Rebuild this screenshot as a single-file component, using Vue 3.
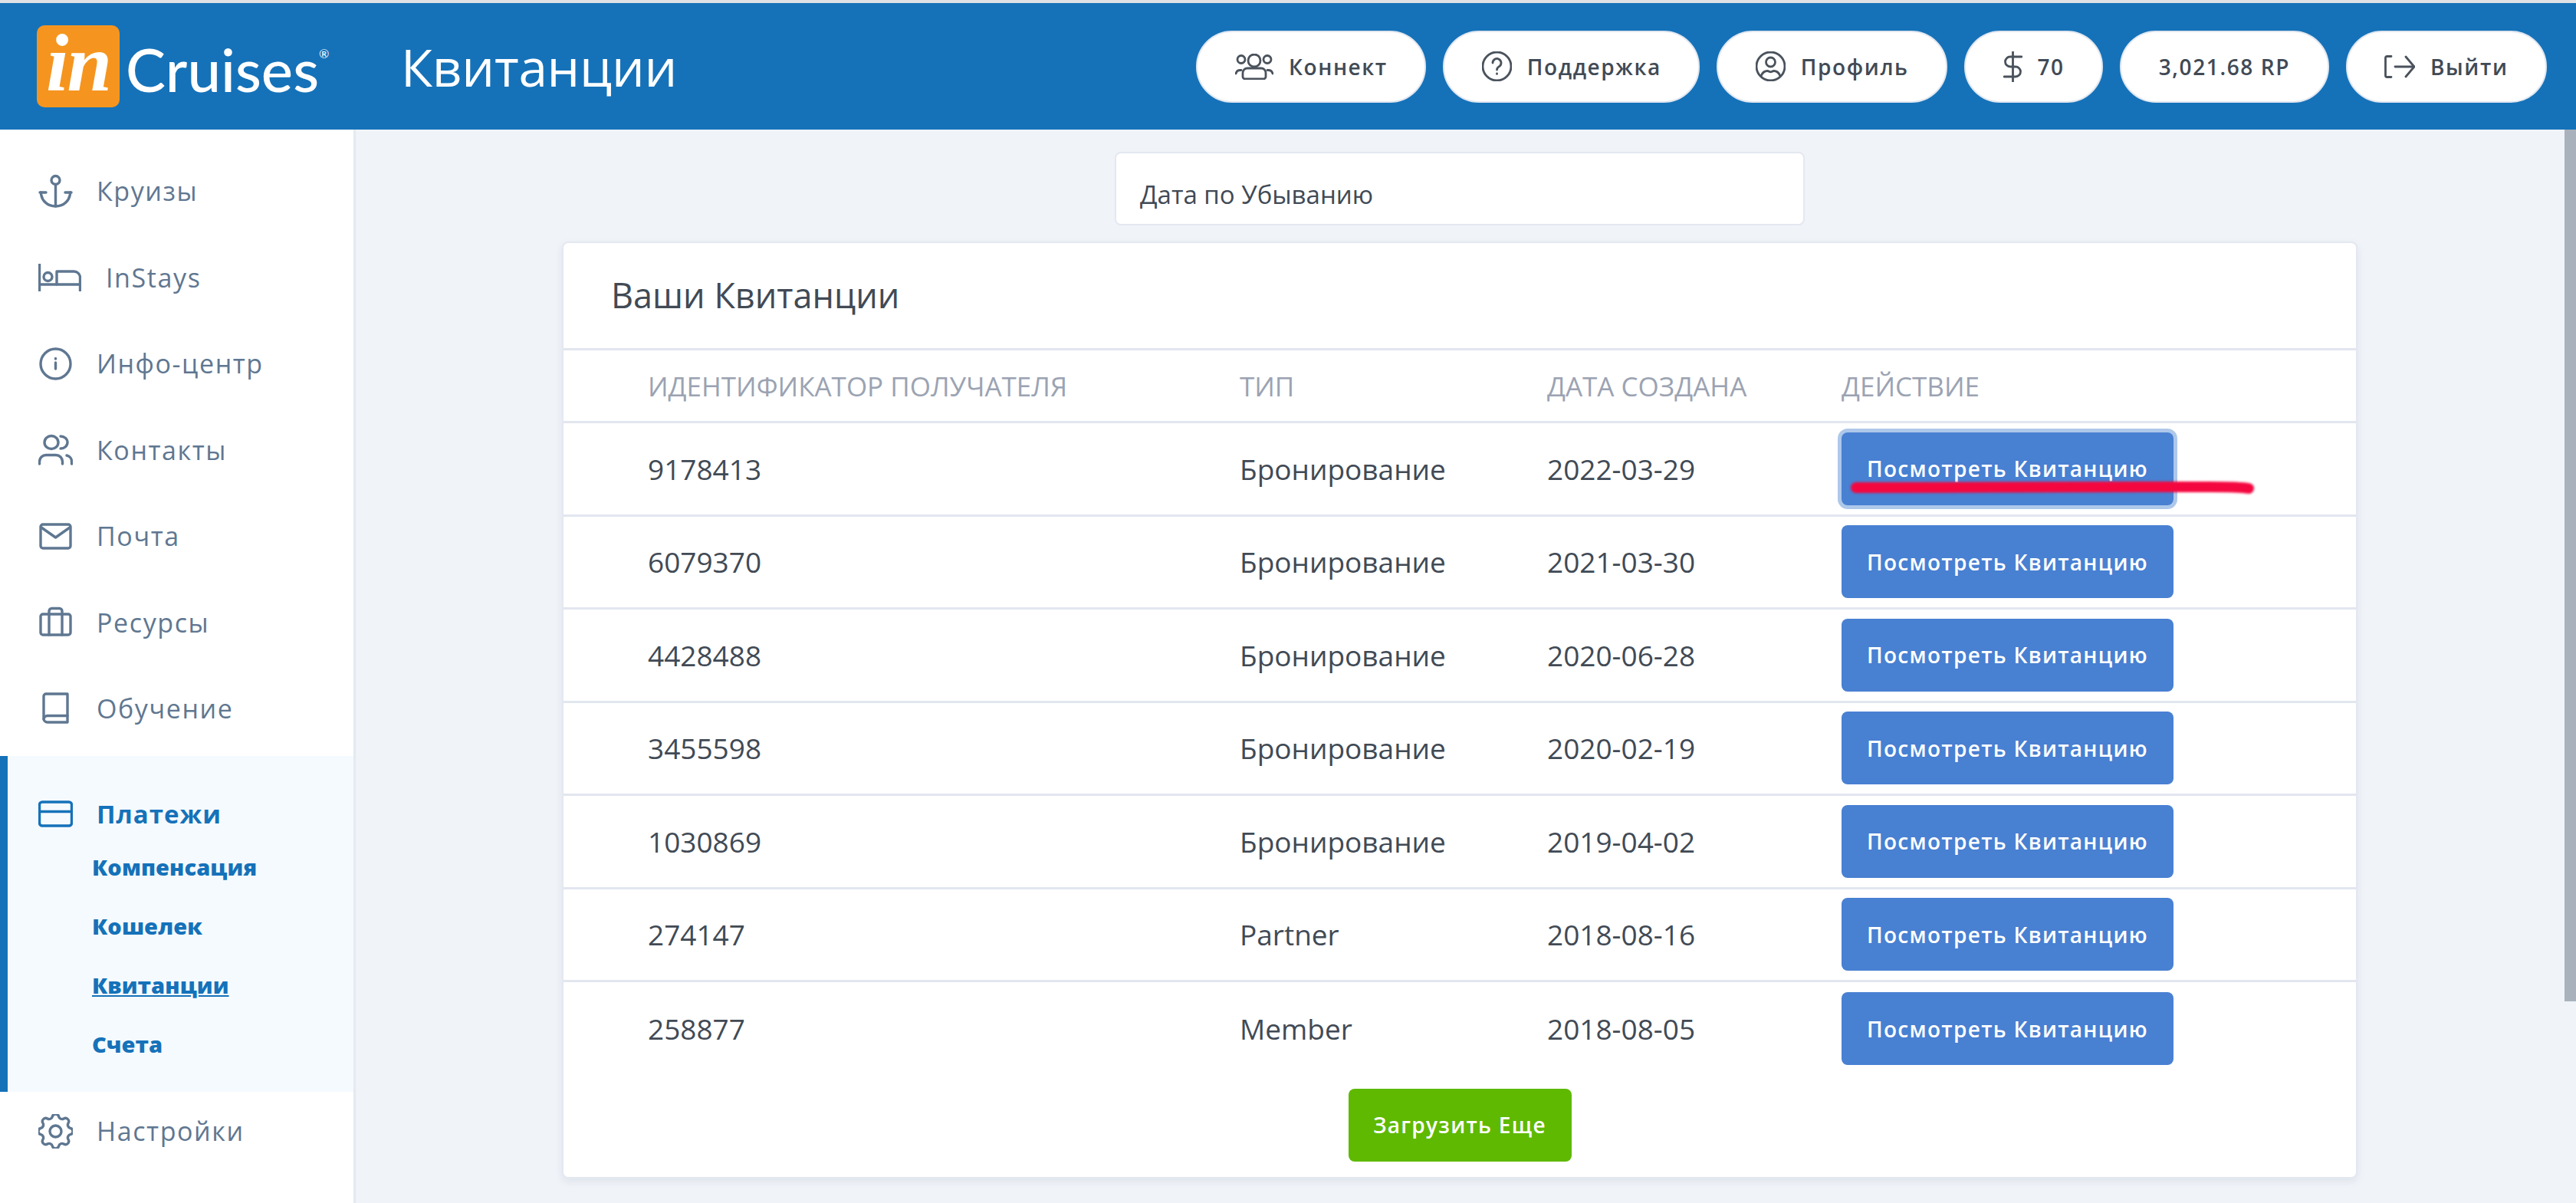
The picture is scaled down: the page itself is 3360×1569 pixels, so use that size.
<script setup>
const gearPath = 'M10.325 4.317c.426-1.756 2.924-1.756 3.35 0a1.724 1.724 0 002.573 1.066c1.543-.94 3.31.826 2.37 2.37a1.724 1.724 0 001.065 2.572c1.756.426 1.756 2.924 0 3.35a1.724 1.724 0 00-1.066 2.573c.94 1.543-.826 3.31-2.37 2.37a1.724 1.724 0 00-2.572 1.065c-.426 1.756-2.924 1.756-3.35 0a1.724 1.724 0 00-2.573-1.066c-1.543.94-3.31-.826-2.37-2.37a1.724 1.724 0 00-1.065-2.572c-1.756-.426-1.756-2.924 0-3.35a1.724 1.724 0 001.066-2.573c-.94-1.543.826-3.31 2.37-2.37.996.608 2.296.07 2.572-1.065z'

const topLinks = [
  {
    label: 'Коннект', w: 50, h: 34,
    icon: [
      'M3 7.5a5 5 0 1 0 10 0a5 5 0 1 0-10 0',
      'M17 9a8 8 0 1 0 16 0a8 8 0 1 0-16 0',
      'M37 7.5a5 5 0 1 0 10 0a5 5 0 1 0-10 0',
      'M13 33a3 3 0 0 1-3-3v-5a6 6 0 0 1 6-6h18a6 6 0 0 1 6 6v5a3 3 0 0 1-3 3z',
      'M1 26a6 6 0 0 1 6-4.5h1',
      'M49 26a6 6 0 0 0-6-4.5h-1',
    ],
  },
  {
    label: 'Поддержка', w: 39, h: 39,
    icon: [
      'M1 19.5a18.500 18.500 0 1 0 37 0a18.500 18.500 0 1 0-37 0',
      'M14 15a5.500 5.500 0 1 1 8.500 4.600c-2 1.300-3 2.400-3 4.400',
      'M19.500 29v.4',
    ],
  },
  {
    label: 'Профиль', w: 39, h: 39,
    icon: [
      'M1 19.500a18.500 18.500 0 1 0 37 0a18.500 18.500 0 1 0-37 0',
      'M13.500 14a6 6 0 1 0 12 0a6 6 0 1 0-12 0',
      'M7 32c2-5 6-6.500 8.500-6.500c1.500 0 2.500 1.300 4 1.300s2.500-1.300 4-1.300c2.500 0 6.500 1.500 8.500 6.500',
    ],
  },
  {
    label: '70', w: 25, h: 40,
    icon: [
      'M12.500 0v40',
      'M24 7H9a6.500 6.500 0 0 0 0 13h7a6.500 6.500 0 0 1 0 13H1',
    ],
  },
  { label: '3,021.68 RP' },
  {
    label: 'Выйти', w: 40, h: 30,
    icon: [
      'M9 1.500H3.500a2 2 0 0 0-2 2v23a2 2 0 0 0 2 2H9',
      'M14 15h25',
      'M28 2l11 13l-11 13',
    ],
  },
]

const sideLinks = [
  {
    label: 'Круизы', view: '0 0 45 45',
    icon: [
      'M17 8a5.500 5.500 0 1 0 11 0a5.500 5.500 0 1 0-11 0',
      'M22.500 13.500V42',
      'M3.500 24c0 10 8 18 19 18s19-8 19-18',
      'M2 24h8',
      'M35 24h8',
    ],
  },
  {
    label: 'InStays', view: '0 0 56 36', bed: true,
    icon: [
      'M1.500 0v36',
      'M54.500 36V18a8 8 0 0 0-8-8H24v17',
      'M1.500 27h53',
      'M7 17a5.500 5.500 0 1 0 11 0a5.500 5.500 0 1 0-11 0',
    ],
  },
  {
    label: 'Инфо-центр', view: '0 0 45 45',
    icon: [
      'M3 22.500a19.500 19.500 0 1 0 39 0a19.500 19.500 0 1 0-39 0',
      'M22.500 21v8',
      'M22.500 15.500v.5',
    ],
  },
  {
    label: 'Контакты', view: '0 0 45 45',
    icon: [
      'M8 13a9 8.500 0 1 0 18 0a9 8.500 0 1 0-18 0',
      'M29 5a9 8 0 0 1 0 16',
      'M1.500 41v-3a8.500 8.500 0 0 1 8.500-8.500h13a8.500 8.500 0 0 1 8.500 8.500v3',
      'M37 30a8 8 0 0 1 6.500 8v3',
    ],
  },
  {
    label: 'Почта', view: '0 0 45 45',
    icon: [
      'M6 7h33a3 3 0 0 1 3 3v25a3 3 0 0 1-3 3H6a3 3 0 0 1-3-3V10a3 3 0 0 1 3-3z',
      'M4 11l18.500 13L41 11',
    ],
  },
  {
    label: 'Ресурсы', view: '0 0 45 45',
    icon: [
      'M6 12h33a3 3 0 0 1 3 3v21a3 3 0 0 1-3 3H6a3 3 0 0 1-3-3V15a3 3 0 0 1 3-3z',
      'M14 12v27',
      'M31 12v27',
      'M14 12V8a3.500 3.500 0 0 1 3.500-3.500h10A3.500 3.500 0 0 1 31 8v4',
    ],
  },
  {
    label: 'Обучение', view: '0 0 45 45',
    icon: [
      'M7 35V6a3 3 0 0 1 3-3h28v37H12a5 5 0 0 1-5-5z',
      'M7 36a5 5 0 0 1 5-4.500h26',
    ],
  },
]

const subLinks = ['Компенсация', 'Кошелек', 'Квитанции', 'Счета']

const receipts = [
  { id: '9178413', type: 'Бронирование', date: '2022-03-29' },
  { id: '6079370', type: 'Бронирование', date: '2021-03-30' },
  { id: '4428488', type: 'Бронирование', date: '2020-06-28' },
  { id: '3455598', type: 'Бронирование', date: '2020-02-19' },
  { id: '1030869', type: 'Бронирование', date: '2019-04-02' },
  { id: '274147', type: 'Partner', date: '2018-08-16' },
  { id: '258877', type: 'Member', date: '2018-08-05' },
]
</script>

<template>
  <div class="page">
    <header class="topbar">
      <div class="logo">
        <span class="logo-mark">in</span>
        <span class="logo-name">Cruises</span>
        <span class="logo-reg">®</span>
      </div>
      <h1 class="page-title">Квитанции</h1>
      <nav class="top-links">
        <a v-for="link in topLinks" :key="link.label" class="pill">
          <svg
            v-if="link.icon"
            :width="link.w"
            :height="link.h"
            :viewBox="`0 0 ${link.w} ${link.h}`"
            class="pill-icon"
          >
            <path v-for="d in link.icon" :key="d" :d="d" />
          </svg>
          <span>{{ link.label }}</span>
        </a>
      </nav>
    </header>

    <div class="layout">
      <aside class="sidebar">
        <a v-for="item in sideLinks" :key="item.label" class="side-item" :class="{ 'has-bed': item.bed }">
          <svg class="side-icon" :viewBox="item.view">
            <path v-for="d in item.icon" :key="d" :d="d" />
          </svg>
          <span>{{ item.label }}</span>
        </a>

        <div class="side-group">
          <div class="side-item side-group-title">
            <svg class="side-icon" viewBox="0 0 45 45">
              <path d="M5 7h35a3.500 3.500 0 0 1 3.500 3.500v24a3.500 3.500 0 0 1-3.500 3.500H5a3.500 3.500 0 0 1-3.500-3.500v-24A3.500 3.500 0 0 1 5 7z" />
              <path d="M2 19.500h41" />
            </svg>
            <span>Платежи</span>
          </div>
          <a
            v-for="sub in subLinks"
            :key="sub"
            class="sub-item"
            :class="{ current: sub === 'Квитанции' }"
          >{{ sub }}</a>
        </div>

        <a class="side-item side-settings">
          <svg class="side-icon" viewBox="3 3 18 18">
            <path :d="gearPath" />
            <path d="M15 12a3 3 0 11-6 0 3 3 0 016 0z" />
          </svg>
          <span>Настройки</span>
        </a>
      </aside>

      <main class="content">
        <div class="sort-select">Дата по Убыванию</div>

        <section class="card">
          <h2 class="card-title">Ваши Квитанции</h2>

          <div class="row row-head">
            <div>ИДЕНТИФИКАТОР ПОЛУЧАТЕЛЯ</div>
            <div>ТИП</div>
            <div>ДАТА СОЗДАНА</div>
            <div>ДЕЙСТВИЕ</div>
          </div>

          <div v-for="(r, i) in receipts" :key="r.id" class="row">
            <div>{{ r.id }}</div>
            <div>{{ r.type }}</div>
            <div>{{ r.date }}</div>
            <div class="action-cell">
              <button class="btn-view" :class="{ focused: i === 0 }">Посмотреть Квитанцию</button>
              <svg v-if="i === 0" class="marker" width="540" height="30" viewBox="0 0 540 30">
                <path d="M13 15C150 14 320 15 440 14C480 14 510 13 525 16" />
              </svg>
            </div>
          </div>

          <button class="btn-more">Загрузить Еще</button>
        </section>
      </main>

      <div class="scrollbar"><div class="scroll-thumb"></div></div>
    </div>
  </div>
</template>

<style scoped>
.page {
  height: 1569px;
  overflow: hidden;
  display: flex;
  flex-direction: column;
  background: #f0f3f8;
  border-top: 4px solid #dfe2e5;
  box-sizing: border-box;
  font-family: "Open Sans", "Noto Sans", sans-serif;
  color: #414a55;
}

.topbar {
  height: 165px;
  flex: none;
  display: flex;
  align-items: center;
  padding: 0 38px 0 48px;
  background: #1572b9;
}

.logo {
  width: 475px;
  display: flex;
  align-items: flex-start;
  color: #fff;
}
.logo-mark {
  width: 108px;
  height: 107px;
  border-radius: 10px;
  background: #f5951f;
  text-align: center;
  font-family: "Liberation Serif", serif;
  font-style: italic;
  font-weight: 700;
  font-size: 105px;
  line-height: 100px;
  letter-spacing: -2px;
}
.logo-name {
  margin: 11px 0 0 8px;
  font-family: Lato, sans-serif;
  font-size: 78px;
  line-height: 92px;
  font-weight: 500;
}
.logo-reg {
  margin: 27px 0 0 0;
  font-family: Lato, sans-serif;
  font-size: 16px;
  line-height: 20px;
}

.page-title {
  margin: 0;
  color: #fff;
  font-size: 67.5px;
  font-weight: 400;
  line-height: 80px;
  letter-spacing: -0.3px;
}

.top-links {
  margin-left: auto;
  display: flex;
  gap: 22px;
}
.pill {
  height: 94px;
  box-sizing: border-box;
  padding: 0 48.5px;
  display: flex;
  align-items: center;
  gap: 20px;
  background: #fff;
  border: 2px solid #e1e7f0;
  border-radius: 47px;
  font-size: 28px;
  font-weight: 600;
  letter-spacing: 1.6px;
  white-space: nowrap;
}
.pill-icon {
  fill: none;
  stroke: #4a525c;
  stroke-width: 2.8;
  stroke-linecap: round;
  stroke-linejoin: round;
}

.layout {
  flex: 1;
  min-height: 0;
  display: flex;
}

.sidebar {
  width: 464px;
  flex: none;
  box-sizing: border-box;
  padding-top: 24px;
  background: #fff;
  border-right: 3px solid #e3eaf2;
}
.side-item {
  height: 112.5px;
  display: flex;
  align-items: center;
  padding-left: 50px;
  color: #5f7791;
  font-size: 34px;
  letter-spacing: 1.6px;
}
.side-icon {
  width: 45px;
  height: 45px;
  flex: none;
  margin-right: 31px;
  fill: none;
  stroke: currentColor;
  stroke-width: 3.4;
  stroke-linecap: round;
  stroke-linejoin: round;
}
.side-icon path {
  vector-effect: non-scaling-stroke;
}
.has-bed .side-icon {
  width: 56px;
  height: 36px;
  margin-right: 32px;
}

.side-group {
  margin-top: 5.5px;
  height: 438px;
  box-sizing: border-box;
  border-left: 10px solid #1572b9;
  background: #f5faff;
  color: #1572b9;
}
.side-group-title {
  height: 50px;
  padding: 50px 0 6px 40px;
  color: #1572b9;
  font-size: 33px;
  letter-spacing: 1px;
  font-weight: 700;
}
.sub-item {
  display: block;
  height: 77px;
  line-height: 77px;
  padding-left: 110px;
  font-size: 29px;
  font-weight: 800;
  letter-spacing: 0.1px;
}
.sub-item.current {
  text-decoration: underline;
}
.side-settings {
  height: 102px;
}

.content {
  flex: 1;
  display: flex;
  flex-direction: column;
  align-items: center;
  padding: 29px 1px 0 0;
}

.sort-select {
  width: 900px;
  height: 96px;
  flex: none;
  box-sizing: border-box;
  display: flex;
  align-items: center;
  padding: 14px 0 0 31px;
  background: #fff;
  border: 2px solid #e3e8f0;
  border-radius: 8px;
  font-size: 33px;
}

.card {
  width: 2342px;
  height: 1222px;
  flex: none;
  margin-top: 21px;
  box-sizing: border-box;
  background: #fff;
  border: 2px solid #e4e8f0;
  border-radius: 8px;
  box-shadow: 0 4px 10px rgba(120, 135, 165, 0.14);
  text-align: center;
}
.card-title {
  height: 137px;
  margin: 0;
  box-sizing: border-box;
  padding: 39px 0 0 62px;
  text-align: left;
  font-size: 45px;
  line-height: 58px;
  font-weight: 400;
}

.row {
  height: 121.5px;
  box-sizing: border-box;
  display: grid;
  grid-template-columns: 772px 401px 384px 1fr;
  align-items: center;
  padding-left: 110px;
  border-bottom: 3px solid #e2e6ef;
  text-align: left;
  font-size: 37px;
}
.row:nth-last-child(2) {
  border-bottom: 0;
}
.row-head {
  height: 98px;
  border-top: 3px solid #e2e6ef;
  color: #9ba3b2;
  font-size: 35px;
}

.action-cell {
  position: relative;
  height: 95px;
}
.btn-view,
.btn-more {
  height: 95px;
  padding: 0;
  border: 0;
  border-radius: 8px;
  color: #fff;
  font-family: inherit;
  font-size: 28px;
  font-weight: 600;
  letter-spacing: 1.3px;
}
.btn-view {
  width: 433px;
  background: #4880d2;
}
.btn-view.focused {
  box-shadow: 0 0 0 5px #aec8ea;
}
.btn-more {
  width: 291px;
  margin-top: 17px;
  background: #5eb900;
}

/* hand-drawn marker over the first button */
.marker {
  position: absolute;
  left: 6px;
  top: 57px;
  overflow: visible;
  filter: blur(1.5px);
}
.marker path {
  fill: none;
  stroke: #f4073f;
  stroke-width: 14;
  stroke-linecap: round;
}

.scrollbar {
  width: 15px;
  flex: none;
}
.scroll-thumb {
  height: 1137px;
  background: #a9b2bc;
}
</style>

<style>
html,
body {
  margin: 0;
  background: #f0f3f8;
}
</style>
